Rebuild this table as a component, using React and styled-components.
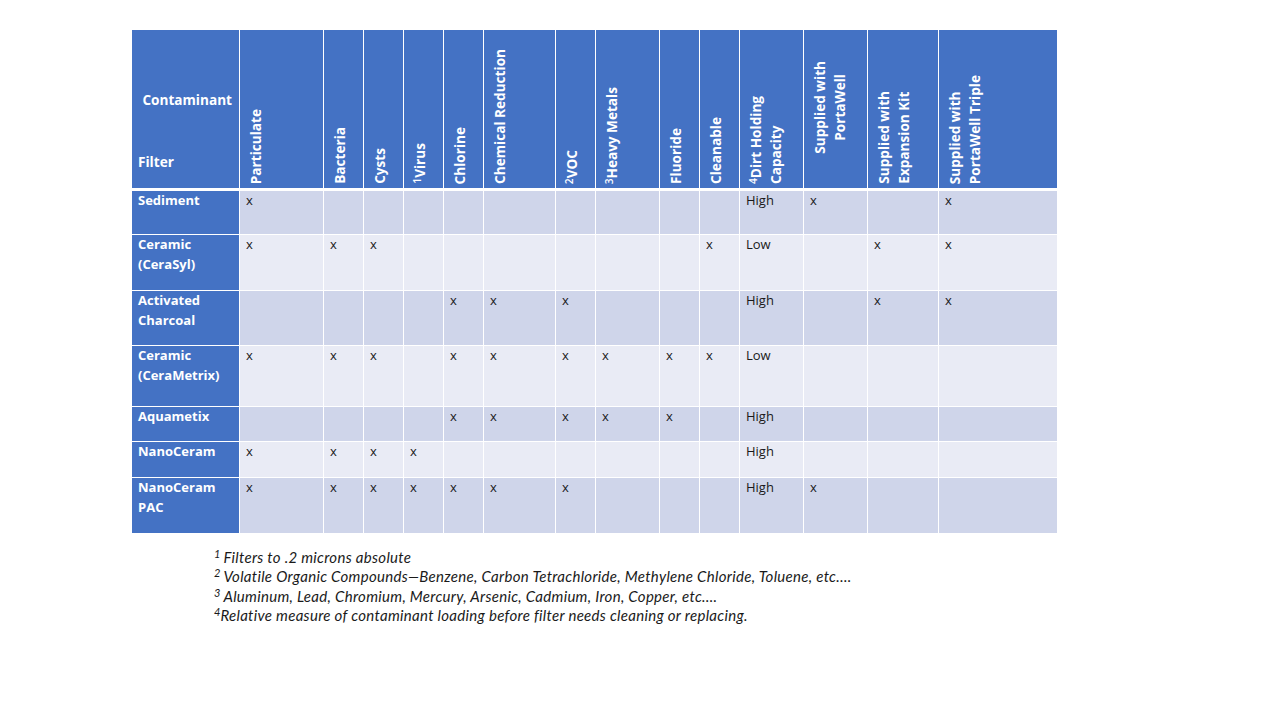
import React from "react";
import styled, { createGlobalStyle } from "styled-components";

const GlobalStyle = createGlobalStyle`
  html, body { margin: 0; padding: 0; background: #ffffff; }
  body { font-family: "Open Sans", "DejaVu Sans", sans-serif; }
`;

const BLUE = "#4472C4";
const DARK = "#CFD5EA";
const LIGHT = "#E9EBF5";
const COLS =
  "107px 83px 39px 39px 39px 39px 71px 39px 63px 39px 39px 63px 63px 70px 118px";
const ROWS = "43px 55px 54px 60px 34px 35px 55px";

const Page = styled.div`
  width: 1280px;
  height: 720px;
  box-sizing: border-box;
  padding: 30px 0 0 132px;
  display: flex;
  flex-direction: column;
  overflow: hidden;
`;

const Table = styled.div`
  width: 925px;
  display: flex;
  flex-direction: column;
  gap: 3px;
`;

const HeaderRow = styled.div`
  display: grid;
  grid-template-columns: ${COLS};
  column-gap: 1px;
  height: 158px;
`;

const Body = styled.div`
  display: grid;
  grid-template-columns: ${COLS};
  grid-template-rows: ${ROWS};
  gap: 1px;
`;

const Corner = styled.div`
  background: ${BLUE};
  color: #fff;
  font-weight: 700;
  font-size: 13.6px;
  line-height: 20px;
  display: flex;
  flex-direction: column;
  justify-content: flex-end;
  padding: 0 7px 16px 6px;
`;

const CornerTop = styled.div`
  align-self: flex-end;
  margin-bottom: 42px;
`;

const HeadCell = styled.div`
  background: ${BLUE};
  color: #fff;
  font-weight: 700;
  font-size: 13.6px;
  display: flex;
  align-items: ${(p) => (p.$center ? "center" : "flex-end")};
  padding: 0 0 4px 6px;
  overflow: hidden;
`;

const VText = styled.div`
  writing-mode: vertical-rl;
  transform: rotate(180deg);
  line-height: 20px;
  white-space: nowrap;
  text-align: ${(p) => (p.$center ? "center" : "start")};
`;

const Sup = styled.sup`
  font-size: 0.75em;
  line-height: 0;
  vertical-align: 3px;
  font-weight: 600;
  margin-right: 1px;
`;

const LabelCell = styled.div`
  background: ${BLUE};
  color: #fff;
  font-weight: 700;
  font-size: 13px;
  line-height: 20px;
  padding: 0 6px;
`;

const DataCell = styled.div`
  background: ${(p) => (p.$dark ? DARK : LIGHT)};
  color: #1a1a1a;
  font-size: 13px;
  line-height: 20px;
  padding: 0 6px;
`;

const CellText = styled.div`
  margin-top: -1px;
`;

const Notes = styled.div`
  margin: 15px 0 0 82px;
  font-family: Lato, "Open Sans", sans-serif;
  font-style: italic;
  font-size: 15px;
  letter-spacing: 0.3px;
  line-height: 19.4px;
  color: #1a1a1a;
`;

const NoteSup = styled.sup`
  font-size: 11px;
  line-height: 0;
  vertical-align: 5px;
  letter-spacing: 0;
  margin-right: ${(p) => (p.$space ? "3px" : "0px")};
`;

const headers = [
  { lines: ["Particulate"] },
  { lines: ["Bacteria"] },
  { lines: ["Cysts"] },
  { sup: "1", lines: ["Virus"] },
  { lines: ["Chlorine"] },
  { lines: ["Chemical Reduction"] },
  { sup: "2", lines: ["VOC"] },
  { sup: "3", lines: ["Heavy Metals"] },
  { lines: ["Fluoride"] },
  { lines: ["Cleanable"] },
  { sup: "4", lines: ["Dirt Holding", "Capacity"] },
  { lines: ["Supplied with", "PortaWell"], center: true },
  { lines: ["Supplied with", "Expansion Kit"] },
  { lines: ["Supplied with", "PortaWell Triple"] },
];

const rows = [
  { label: ["Sediment"], cells: ["x", "", "", "", "", "", "", "", "", "", "High", "x", "", "x"] },
  { label: ["Ceramic", "(CeraSyl)"], cells: ["x", "x", "x", "", "", "", "", "", "", "x", "Low", "", "x", "x"] },
  { label: ["Activated", "Charcoal"], cells: ["", "", "", "", "x", "x", "x", "", "", "", "High", "", "x", "x"] },
  { label: ["Ceramic", "(CeraMetrix)"], cells: ["x", "x", "x", "", "x", "x", "x", "x", "x", "x", "Low", "", "", ""] },
  { label: ["Aquametix"], cells: ["", "", "", "", "x", "x", "x", "x", "x", "", "High", "", "", ""] },
  { label: ["NanoCeram"], cells: ["x", "x", "x", "x", "", "", "", "", "", "", "High", "", "", ""] },
  { label: ["NanoCeram", "PAC"], cells: ["x", "x", "x", "x", "x", "x", "x", "", "", "", "High", "x", "", ""] },
];

const notes = [
  { n: "1", space: true, text: "Filters to .2 microns absolute" },
  {
    n: "2",
    space: true,
    text: "Volatile Organic Compounds\u2014Benzene,  Carbon Tetrachloride, Methylene Chloride, Toluene, etc\u2026.",
  },
  {
    n: "3",
    space: true,
    text: "Aluminum, Lead, Chromium, Mercury, Arsenic, Cadmium, Iron, Copper,  etc\u2026.",
  },
  {
    n: "4",
    space: false,
    text: "Relative measure of contaminant loading before filter needs cleaning or replacing.",
  },
];

export default function App() {
  return (
    <>
      <GlobalStyle />
      <Page>
        <Table>
          <HeaderRow>
            <Corner>
              <CornerTop>Contaminant</CornerTop>
              <div>Filter</div>
            </Corner>
            {headers.map((h, i) => (
              <HeadCell key={i} $center={h.center}>
                <VText $center={h.center}>
                  {h.lines.map((l, j) => (
                    <div key={j}>
                      {j === 0 && h.sup ? <Sup>{h.sup}</Sup> : null}
                      {l}
                    </div>
                  ))}
                </VText>
              </HeadCell>
            ))}
          </HeaderRow>
          <Body>
            {rows.map((r, ri) => (
              <React.Fragment key={ri}>
                <LabelCell>
                  <CellText>
                    {r.label.map((l, j) => (
                      <div key={j}>{l}</div>
                    ))}
                  </CellText>
                </LabelCell>
                {r.cells.map((c, ci) => (
                  <DataCell key={ci} $dark={ri % 2 === 0}>
                    <CellText>{c}</CellText>
                  </DataCell>
                ))}
              </React.Fragment>
            ))}
          </Body>
        </Table>
        <Notes>
          {notes.map((n) => (
            <div key={n.n}>
              <NoteSup $space={n.space}>{n.n}</NoteSup>
              {n.text}
            </div>
          ))}
        </Notes>
      </Page>
    </>
  );
}
